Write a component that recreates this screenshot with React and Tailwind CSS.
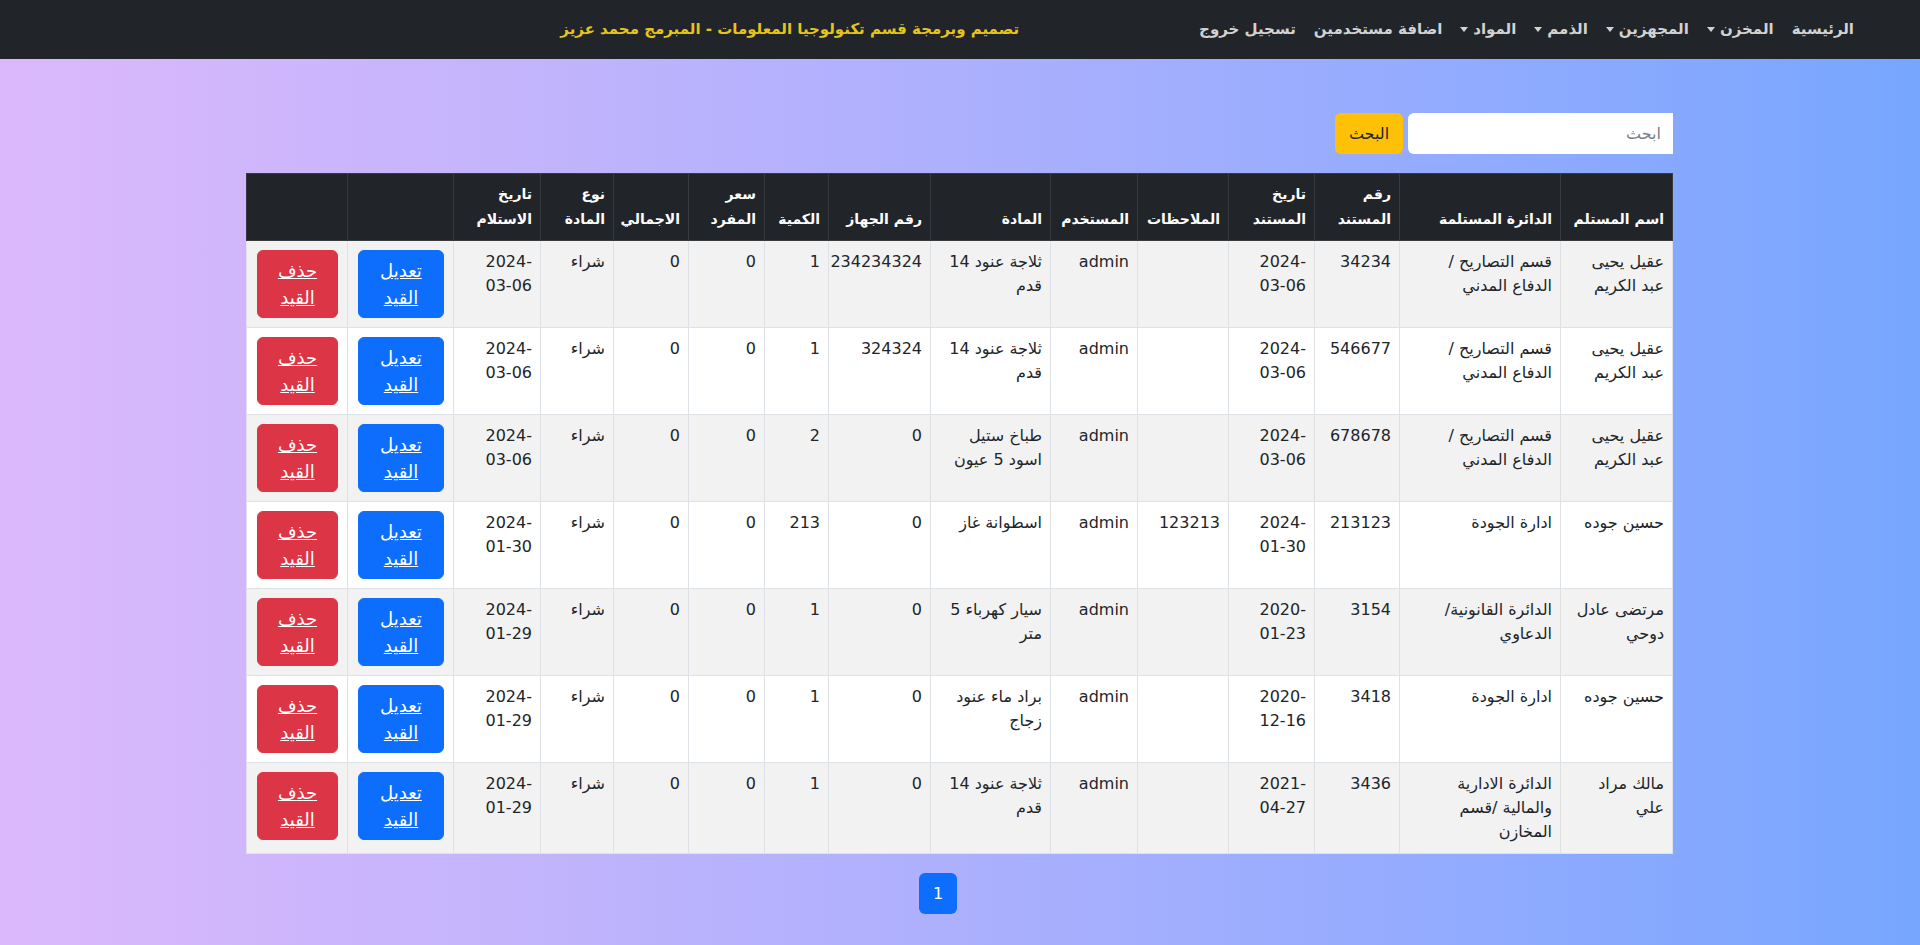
import React from "react";

// عرض الاعمدة بالبكسل من اليمين الى اليسار
const cols = [112, 161, 85, 86, 91, 87, 120, 102, 64, 76, 75, 73, 87, 106, 101];

const headers = [
  "اسم المستلم",
  "الدائرة المستلمة",
  "رقم\nالمستند",
  "تاريخ\nالمستند",
  "الملاحظات",
  "المستخدم",
  "المادة",
  "رقم الجهاز",
  "الكمية",
  "سعر\nالمفرد",
  "الاجمالي",
  "نوع\nالمادة",
  "تاريخ\nالاستلام",
  "",
  "",
];

const rows = [
  {
    name: "عقيل يحيى\nعبد الكريم",
    dept: "قسم التصاريح /\nالدفاع المدني",
    docNo: "34234",
    docDate: "2024-03-06",
    notes: "",
    user: "admin",
    item: "ثلاجة عنود 14\nقدم",
    device: "234234324",
    qty: "1",
    price: "0",
    total: "0",
    type: "شراء",
    recvDate: "2024-03-06",
  },
  {
    name: "عقيل يحيى\nعبد الكريم",
    dept: "قسم التصاريح /\nالدفاع المدني",
    docNo: "546677",
    docDate: "2024-03-06",
    notes: "",
    user: "admin",
    item: "ثلاجة عنود 14\nقدم",
    device: "324324",
    qty: "1",
    price: "0",
    total: "0",
    type: "شراء",
    recvDate: "2024-03-06",
  },
  {
    name: "عقيل يحيى\nعبد الكريم",
    dept: "قسم التصاريح /\nالدفاع المدني",
    docNo: "678678",
    docDate: "2024-03-06",
    notes: "",
    user: "admin",
    item: "طباخ ستيل\nاسود 5 عيون",
    device: "0",
    qty: "2",
    price: "0",
    total: "0",
    type: "شراء",
    recvDate: "2024-03-06",
  },
  {
    name: "حسين جوده",
    dept: "ادارة الجودة",
    docNo: "213123",
    docDate: "2024-01-30",
    notes: "123213",
    user: "admin",
    item: "اسطوانة غاز",
    device: "0",
    qty: "213",
    price: "0",
    total: "0",
    type: "شراء",
    recvDate: "2024-01-30",
  },
  {
    name: "مرتضى عادل\nدوحي",
    dept: "الدائرة القانونية/\nالدعاوي",
    docNo: "3154",
    docDate: "2020-01-23",
    notes: "",
    user: "admin",
    item: "سيار كهرباء 5\nمتر",
    device: "0",
    qty: "1",
    price: "0",
    total: "0",
    type: "شراء",
    recvDate: "2024-01-29",
  },
  {
    name: "حسين جوده",
    dept: "ادارة الجودة",
    docNo: "3418",
    docDate: "2020-12-16",
    notes: "",
    user: "admin",
    item: "براد ماء عنود\nزجاج",
    device: "0",
    qty: "1",
    price: "0",
    total: "0",
    type: "شراء",
    recvDate: "2024-01-29",
  },
  {
    name: "مالك مراد\nعلي",
    dept: "الدائرة الادارية\nوالمالية /قسم\nالمخازن",
    docNo: "3436",
    docDate: "2021-04-27",
    notes: "",
    user: "admin",
    item: "ثلاجة عنود 14\nقدم",
    device: "0",
    qty: "1",
    price: "0",
    total: "0",
    type: "شراء",
    recvDate: "2024-01-29",
  },
];

const navItems = [
  { label: "الرئيسية" },
  { label: "المخزن", drop: true },
  { label: "المجهزين", drop: true },
  { label: "الذمم", drop: true },
  { label: "المواد", drop: true },
  { label: "اضافة مستخدمين" },
  { label: "تسجيل خروج" },
];

// التاريخ ينقسم على سطرين مثل الاصل
const DateCell = ({ value }) => (
  <>
    <div dir="ltr" className="text-right">{value.slice(0, 5)}</div>
    <div dir="ltr" className="text-right">{value.slice(5)}</div>
  </>
);

const Td = ({ children }) => (
  <td className="border border-[#dee2e6] px-2 py-[9px] align-top text-right whitespace-pre-line leading-[24px]">
    {children}
  </td>
);

const App = () => {
  return (
    <div
      dir="rtl"
      className="min-h-screen bg-gradient-to-r from-[#dcb8fb] to-[#77a6ff] font-['DejaVu_Sans',sans-serif] text-[#212529] text-[16px]"
    >
      {/* شريط التنقل */}
      <nav className="h-[59px] bg-[#212529] flex items-center pr-[57px]">
        <ul className="flex items-center">
          {navItems.map((item) => (
            <li key={item.label}>
              <a
                href="#"
                className="flex items-center px-[9px] text-[15px] font-semibold text-[#d2d2d2] whitespace-nowrap"
              >
                {item.label}
                {item.drop && (
                  <span className="ms-[5px] inline-block w-0 h-0 border-x-[4px] border-x-transparent border-t-[5px] border-t-[#d2d2d2]" />
                )}
              </a>
            </li>
          ))}
        </ul>
        <span className="ms-[171px] text-[15px] font-bold text-[#e6c41c] whitespace-nowrap">
          تصميم وبرمجة قسم تكنولوجيا المعلومات - المبرمج محمد عزيز
        </span>
      </nav>

      <main className="w-[1426px] mx-auto pt-[54px] pb-[33px]">
        {/* البحث */}
        <form className="flex gap-[5px]" onSubmit={(e) => e.preventDefault()}>
          <input
            type="text"
            placeholder="ابحث"
            className="w-[265px] h-[41px] bg-white rounded-l-[6px] px-3 text-[16px] placeholder:text-[#7a7f85] outline-none"
          />
          <button
            type="submit"
            className="w-[68px] h-[41px] bg-[#ffc107] rounded-[6px] text-[16px] text-[#212529]"
          >
            البحث
          </button>
        </form>

        {/* الجدول */}
        <table className="mt-[19px] w-full table-fixed border-collapse">
          <colgroup>
            {cols.map((w, i) => (
              <col key={i} style={{ width: w }} />
            ))}
          </colgroup>
          <thead>
            <tr className="bg-[#212529] text-white">
              {headers.map((h, i) => (
                <th
                  key={i}
                  className="border border-[#373b3e] px-2 py-2 align-bottom text-right font-bold text-[14px] leading-[25px] whitespace-pre"
                >
                  {h}
                </th>
              ))}
            </tr>
          </thead>
          <tbody>
            {rows.map((r, i) => (
              <tr key={i} className={i % 2 === 0 ? "bg-[#f2f2f2]" : "bg-white"}>
                <Td>{r.name}</Td>
                <Td>{r.dept}</Td>
                <Td>{r.docNo}</Td>
                <Td>
                  <DateCell value={r.docDate} />
                </Td>
                <Td>{r.notes}</Td>
                <Td>{r.user}</Td>
                <Td>{r.item}</Td>
                <Td>{r.device}</Td>
                <Td>{r.qty}</Td>
                <Td>{r.price}</Td>
                <Td>{r.total}</Td>
                <Td>{r.type}</Td>
                <Td>
                  <DateCell value={r.recvDate} />
                </Td>
                <td className="border border-[#dee2e6] pr-[9px] pl-[10px] py-[9px] align-top">
                  <a
                    href="#"
                    className="block w-full rounded-[6px] border border-[#0d6efd] bg-[#0d6efd] py-[6px] text-center text-[18px] leading-[27px] text-white underline"
                  >
                    تعديل
                    <br />
                    القيد
                  </a>
                </td>
                <td className="border border-[#dee2e6] pr-[9px] pl-[10px] py-[9px] align-top">
                  <a
                    href="#"
                    className="block w-full rounded-[6px] border border-[#dc3545] bg-[#dc3545] py-[6px] text-center text-[18px] leading-[27px] text-white underline"
                  >
                    حذف
                    <br />
                    القيد
                  </a>
                </td>
              </tr>
            ))}
          </tbody>
        </table>

        {/* ترقيم الصفحات */}
        <div className="mt-[19px] flex justify-center ps-[44px]">
          <a
            href="#"
            className="w-[38px] h-[41px] flex items-center justify-center rounded-[6px] bg-[#0d6efd] text-white text-[16px]"
          >
            1
          </a>
        </div>
      </main>
    </div>
  );
};

export default App;
